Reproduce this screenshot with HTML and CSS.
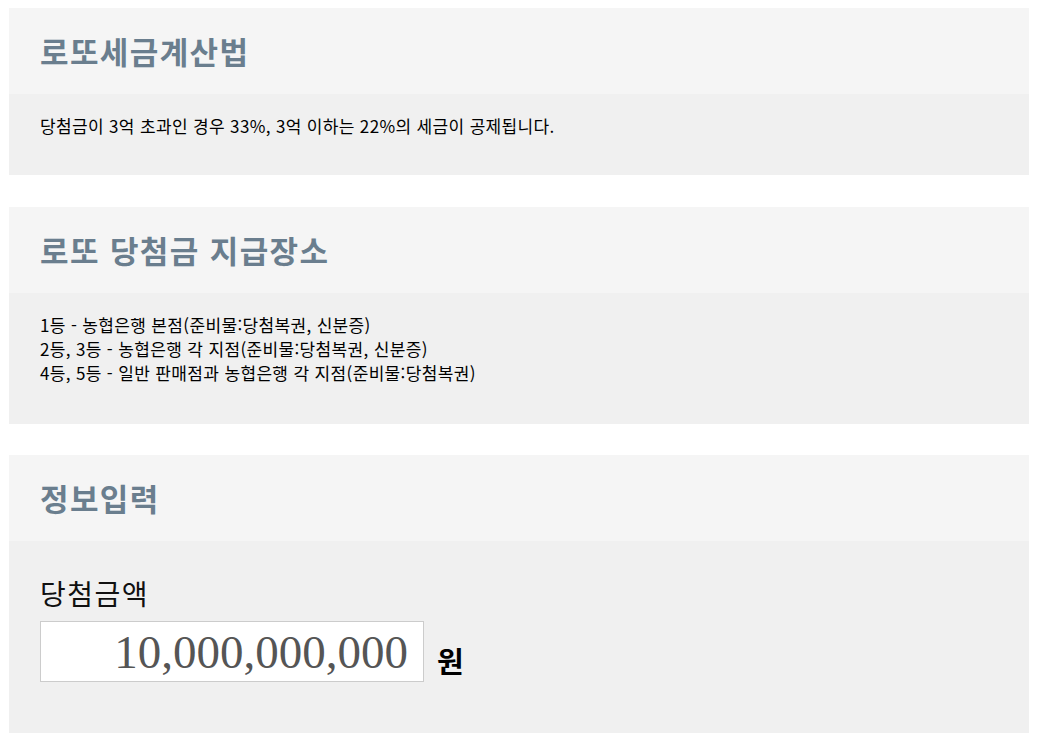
FILE: index.html
```html
<!DOCTYPE html>
<html lang="ko">
<head>
    <meta charset="UTF-8">
    <meta name="viewport" content="width=device-width, initial-scale=1.0">
    <title>로또 세금 계산기</title>
    <link rel="stylesheet" href="styles.css">
</head>
<body>

    <div class="box box-tax">
        <div class="box-head">
            <h2>로또세금계산법</h2>
        </div>
        <div class="box-body">
            <p>당첨금이 3억 초과인 경우 33%, 3억 이하는 22%의 세금이 공제됩니다.</p>
        </div>
    </div>

    <div class="box box-place">
        <div class="box-head">
            <h2>로또 당첨금 지급장소</h2>
        </div>
        <div class="box-body">
            <p>1등 - 농협은행 본점(준비물:당첨복권, 신분증)</p>
            <p>2등, 3등 - 농협은행 각 지점(준비물:당첨복권, 신분증)</p>
            <p>4등, 5등 - 일반 판매점과 농협은행 각 지점(준비물:당첨복권)</p>
        </div>
    </div>

    <div class="box box-input">
        <div class="box-head">
            <h2>정보입력</h2>
        </div>
        <div class="box-body">
            <label class="field-label" for="amount">당첨금액</label>
            <div class="field-row">
                <input type="text" id="amount" value="10,000,000,000">
                <span class="unit">원</span>
            </div>
        </div>
    </div>

</body>
</html>
```

FILE: styles.css
```css
body {
    margin: 8px 11px 0 9px;
    background-color: #fff;
    font-family: "Noto Sans CJK KR", "Noto Sans", sans-serif;
    color: #000;
}

.box {
    margin-bottom: 32px;
}

.box-head {
    background-color: #f5f5f5;
    padding: 20px 31px 21px;
}

.box-head h2 {
    margin: 0;
    font-size: 31px;
    line-height: 45px;
    font-weight: 700;
    letter-spacing: 1.4px;
    color: #6a7e8e;
}

.box-body {
    background-color: #f0f0f0;
    padding: 20px 31px 37px;
}

.box-body p {
    margin: 0;
    font-size: 17px;
    line-height: 24px;
    letter-spacing: 0.35px;
}

.box-place {
    margin-bottom: 31px;
}

.box-place .box-body {
    padding-bottom: 39px;
}

.box-input .box-body {
    padding-top: 33px;
    padding-bottom: 51px;
}

.field-label {
    display: block;
    font-size: 28px;
    line-height: 39px;
    letter-spacing: 1.5px;
    color: #111;
    margin-bottom: 8px;
}

.field-row {
    display: flex;
    align-items: flex-end;
}

.field-row input {
    box-sizing: border-box;
    width: 384px;
    height: 61px;
    margin: 0;
    padding: 0 15px 0 10px;
    border: 1px solid #ccc;
    background: #fff;
    font-family: "Liberation Serif", "DejaVu Serif", serif;
    font-size: 47px;
    color: #555;
    text-align: right;
    outline: none;
}

.unit {
    margin: 0 0 2px 13px;
    font-size: 29px;
    line-height: 40px;
    font-weight: 700;
}
```
